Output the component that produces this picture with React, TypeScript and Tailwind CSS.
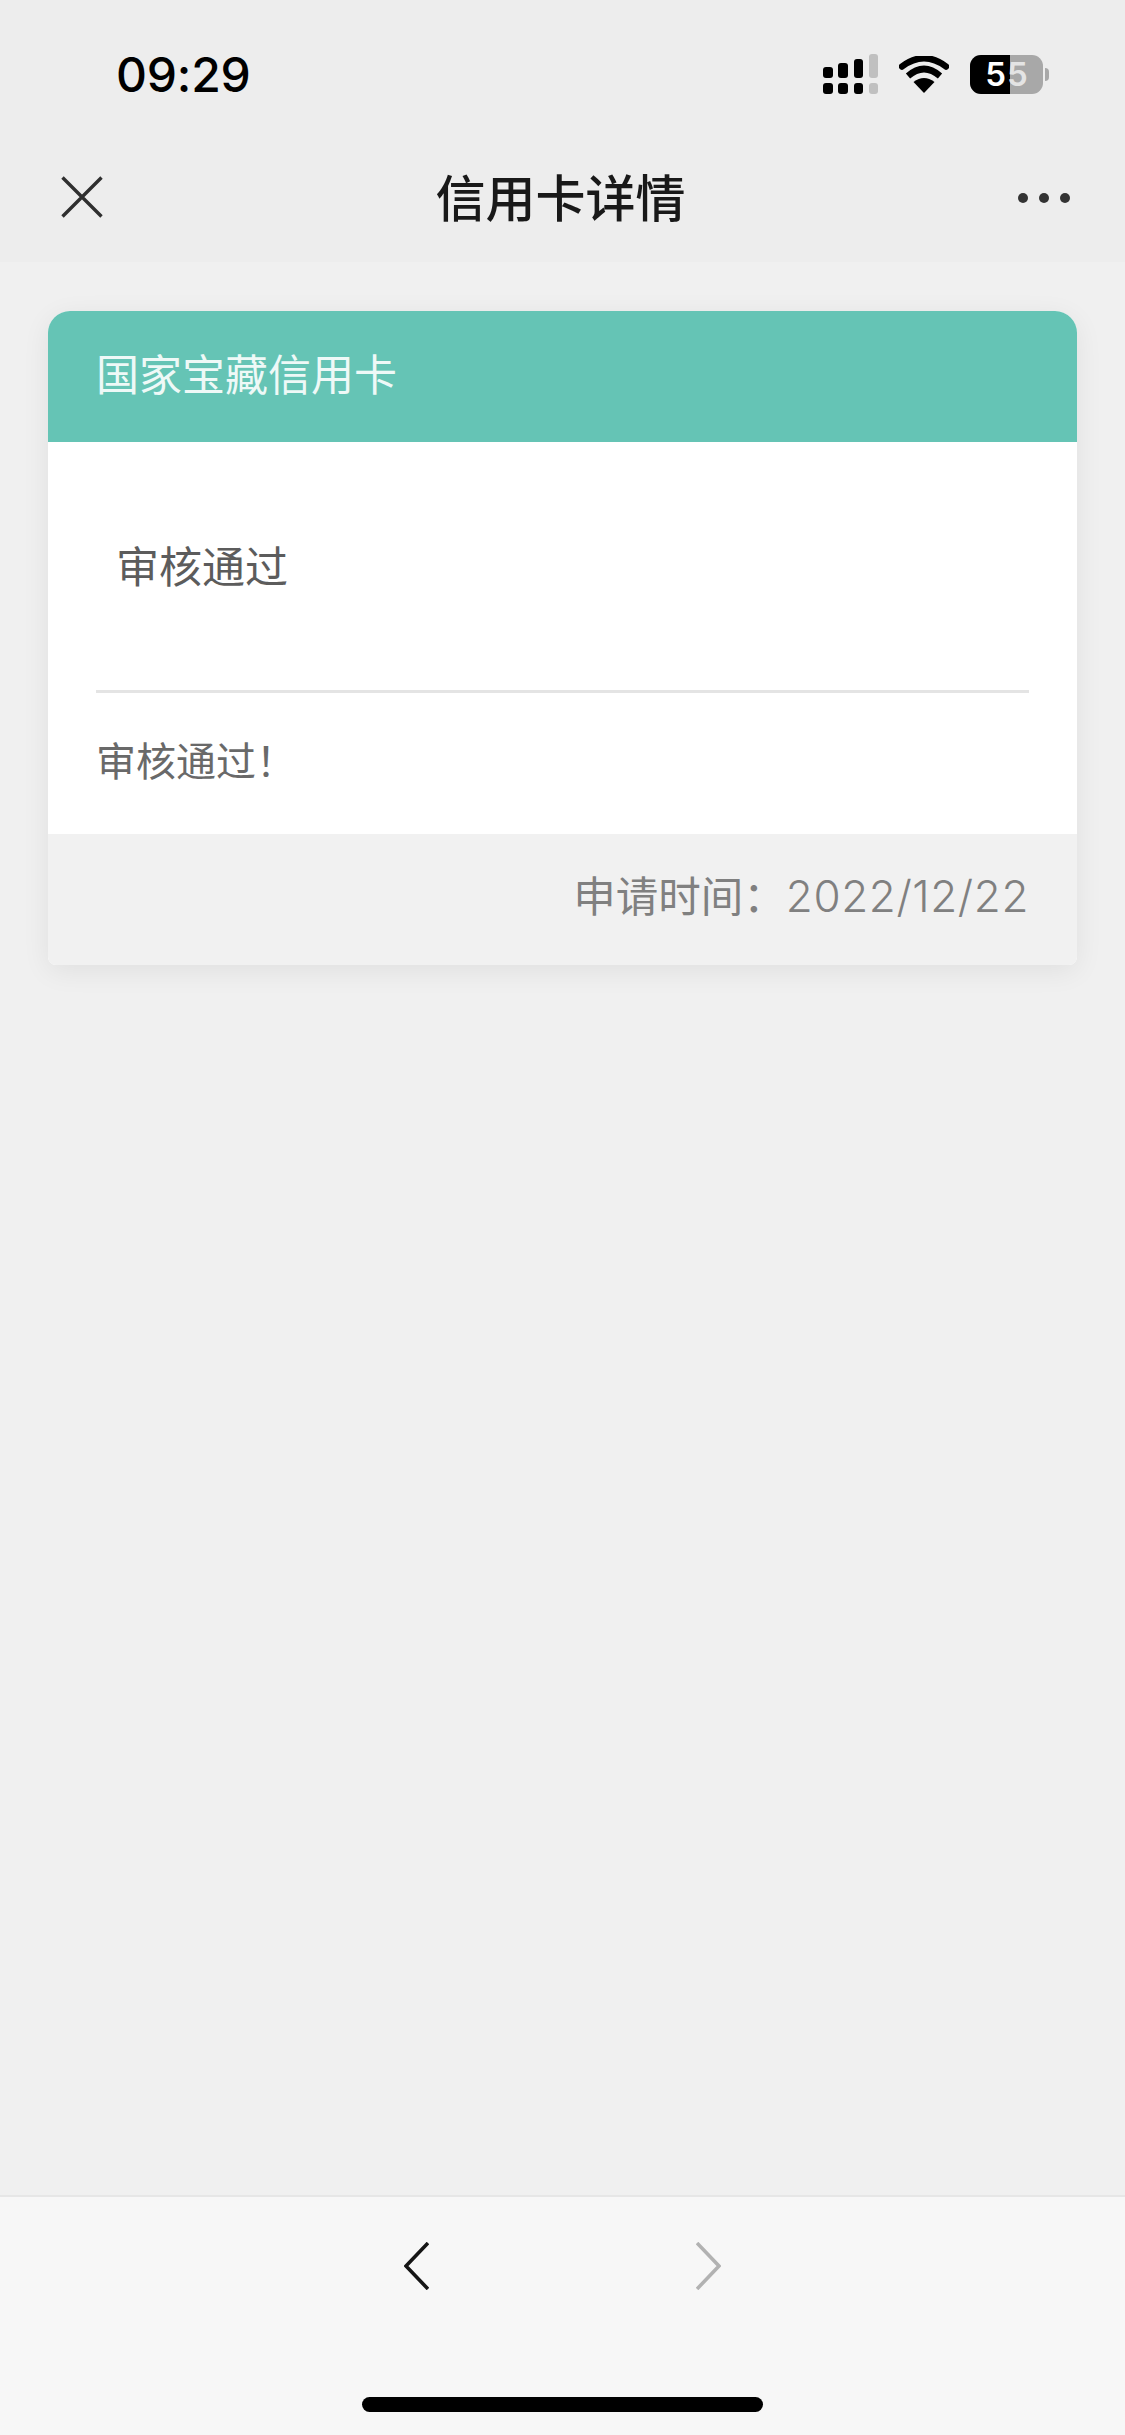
export default function App() {
  const font = { fontFamily: '"Noto Sans CJK SC", "Liberation Sans", sans-serif' };
  return (
    <div className="flex h-[2435px] w-[1125px] flex-col overflow-hidden bg-[#f0f0f0]" style={font}>
      <header className="h-[262px] shrink-0 bg-[#ededed]">
        <div className="flex h-[150px] items-start justify-between pl-[116px] pr-[76px] pt-[48px]">
          <span className="text-[48px] leading-[54px] font-[550] tracking-[-0.2px] text-black [font-family:Inter,sans-serif]">09:29</span>
          <div className="flex items-start gap-[21px] pt-[7px]">
            <svg width="58" height="40" viewBox="0 0 58 40" className="mt-[-1px]">
              <rect x="3" y="13" width="10" height="11" rx="3" fill="#000" />
              <rect x="18" y="9" width="10" height="15" rx="3" fill="#000" />
              <rect x="34" y="5" width="9" height="19" rx="3" fill="#000" />
              <rect x="49" y="0" width="9" height="24" rx="3" fill="#c0c0c0" />
              <rect x="3" y="29" width="10" height="11" rx="3" fill="#000" />
              <rect x="18" y="29" width="10" height="11" rx="3" fill="#000" />
              <rect x="34" y="29" width="9" height="11" rx="3" fill="#000" />
              <rect x="49" y="29" width="9" height="11" rx="3" fill="#c0c0c0" />
            </svg>
            <svg width="50" height="38" viewBox="0 0 50 38" className="mt-[1px]">
              <path d="M25 37 L14.5 26 Q25 18 35.5 26 Z" fill="#000" />
              <path d="M9 20 Q25 6 41 20" fill="none" stroke="#000" strokeWidth="6.5" />
              <path d="M3 10.5 Q25 -6 47 10.5" fill="none" stroke="#000" strokeWidth="6.5" strokeLinecap="round" />
            </svg>
            <div className="flex items-center">
              <div className="relative flex h-[39px] w-[73px] rounded-[11px] bg-[#a8a8a8]">
                <div className="h-full w-[40px] rounded-l-[11px] bg-black" />
                <div className="absolute inset-0 flex items-center justify-center gap-[1px] text-[33px] leading-[39px] font-semibold [font-family:Inter,sans-serif]">
                  <span className="text-white">5</span>
                  <span className="text-[#e4e4e4]">5</span>
                </div>
              </div>
              <div className="ml-[2px] h-[13px] w-[4px] rounded-r-full bg-[#a8a8a8]" />
            </div>
          </div>
        </div>
        <div className="flex h-[96px] items-center justify-between pl-[61px] pr-[55px]">
          <svg width="42" height="42" viewBox="0 0 42 42" className="mb-[2px]">
            <path d="M1.5 1.5 L40.5 40.5 M40.5 1.5 L1.5 40.5" stroke="#2f2f2f" strokeWidth="3.4" fill="none" />
          </svg>
          <h1 className="mb-[6px] text-[50px] leading-[60px] font-medium text-[#191919]">信用卡详情</h1>
          <div className="flex w-[52px] justify-between">
            <span className="h-[10px] w-[10px] rounded-full bg-[#333333]" />
            <span className="h-[10px] w-[10px] rounded-full bg-[#333333]" />
            <span className="h-[10px] w-[10px] rounded-full bg-[#333333]" />
          </div>
        </div>
      </header>

      <main className="flex-1 px-[48px] pt-[49px]">
        <section className="overflow-hidden rounded-t-[22px] rounded-b-[8px] bg-white shadow-[0_6px_28px_rgba(0,0,0,0.07)]">
          <div className="flex h-[131px] items-center bg-[#65c4b5] pb-[9px] pl-[48px] text-[43px] leading-[60px] font-normal text-[#eef9f7]">
            国家宝藏信用卡
          </div>
          <div className="px-[48px]">
            <div className="flex h-[251px] items-start border-b-[3px] border-[#e4e4e4] pl-[20px] pt-[92px] text-[43px] leading-[60px] font-normal text-[#5c5c5c]">
              审核通过
            </div>
            <p className="h-[141px] pt-[36px] text-[40px] leading-[60px] font-normal text-[#696969]">审核通过！</p>
          </div>
          <div className="flex h-[131px] items-baseline justify-end bg-[#f1f1f1] pr-[48px] pt-[30px] leading-[60px] text-[#808080]">
            <span className="text-[42.5px] font-normal">申请时间：</span>
            <span className="text-[44px] font-light tracking-[0.6px] [font-family:Inter,sans-serif]">2022/12/22</span>
          </div>
        </section>
      </main>

      <footer className="relative h-[240px] shrink-0 border-t-[2px] border-[#e6e6e6] bg-[#f7f7f7]">
        <div className="flex justify-center gap-[267px] pt-[45px]">
          <svg width="25" height="48" viewBox="0 0 25 48">
            <path d="M24 1 L2 24 L24 47" stroke="#151515" strokeWidth="3.6" fill="none" />
          </svg>
          <svg width="25" height="48" viewBox="0 0 25 48">
            <path d="M1 1 L23 24 L1 47" stroke="#b2b2b2" strokeWidth="3.6" fill="none" />
          </svg>
        </div>
        <div className="absolute bottom-[23px] left-[362px] h-[15px] w-[401px] rounded-full bg-black" />
      </footer>
    </div>
  );
}
